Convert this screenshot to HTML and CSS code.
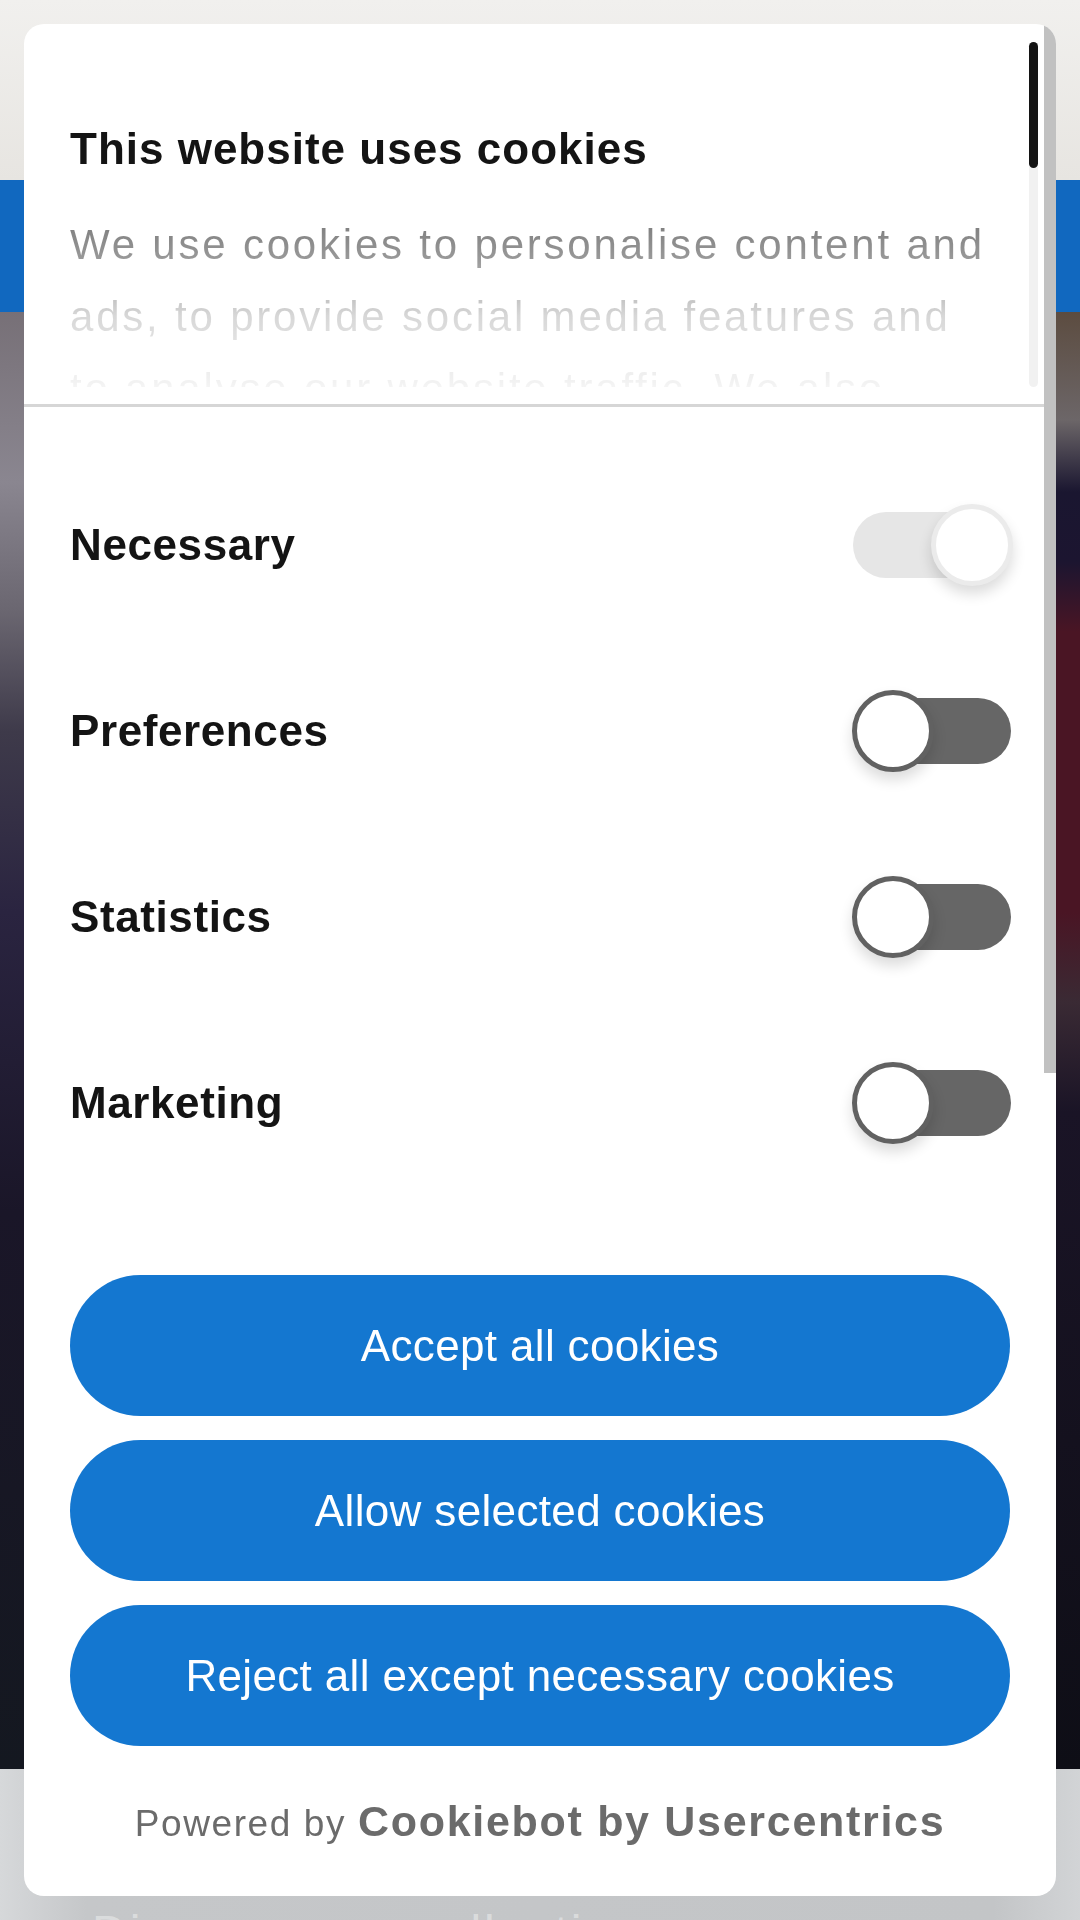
FILE: index.html
```html
<!DOCTYPE html>
<html lang="en">
  <head>
    <meta charset="UTF-8" />
    <meta name="viewport" content="width=device-width, initial-scale=1.0" />
    <title>This website uses cookies</title>
    <link rel="stylesheet" href="styles.css">
  </head>
  <body>
    <div class="page">
      <div class="site-top"></div>
      <div class="site-nav"></div>
      <div class="hero"></div>
      <div class="site-bottom">
        <h2>Discover our collection</h2>
      </div>
    </div>

    <div class="overlay">
      <div class="dialog">
        <div class="dialog-header">
          <div class="header-scroll">
            <h1>This website uses cookies</h1>
            <p>
              We use cookies to personalise content and ads, to provide social
              media features and to analyse our website traffic. We also share
              information about your use of our site with our social media,
              advertising and analytics partners who may combine it with other
              information that you’ve provided to them or that they’ve
              collected from your use of their services.
            </p>
          </div>
          <div class="fade"></div>
          <div class="header-scrollbar"><span class="thumb"></span></div>
        </div>

        <div class="categories">
          <label class="category">
            <span class="label">Necessary</span>
            <span class="toggle on disabled"><span class="knob"></span></span>
          </label>
          <label class="category">
            <span class="label">Preferences</span>
            <span class="toggle"><span class="knob"></span></span>
          </label>
          <label class="category">
            <span class="label">Statistics</span>
            <span class="toggle"><span class="knob"></span></span>
          </label>
          <label class="category">
            <span class="label">Marketing</span>
            <span class="toggle"><span class="knob"></span></span>
          </label>
        </div>

        <div class="actions">
          <button class="btn">Accept all cookies</button>
          <button class="btn">Allow selected cookies</button>
          <button class="btn">Reject all except necessary cookies</button>
        </div>

        <div class="powered">
          <p>Powered by <strong>Cookiebot by Usercentrics</strong></p>
        </div>

        <div class="dialog-scrollbar"></div>
      </div>
    </div>
  </body>
</html>
```

FILE: styles.css
```css
* {
  box-sizing: border-box;
}

html,
body {
  margin: 0;
  padding: 0;
}

body {
  font-family: "Liberation Sans", Arial, sans-serif;
  color: #141414;
}

/* page behind the consent dialog */
.site-top {
  height: 180px;
  background: linear-gradient(#f1f0ee, #e7e5e1);
}

.site-nav {
  height: 132px;
  background: #1168bf;
}

.hero {
  height: 1457px;
  background:
    linear-gradient(#777077 0, #8a8690 170px, #6a6670 300px, #3e3a4a 420px,
      #2a2440 600px, #1a1628 900px, #141820 100%) left / 50% 100% no-repeat,
    linear-gradient(#5c4c40 0, #6c6668 108px, #1a1630 180px, #1c1530 250px,
      #4a1524 320px, #4a1524 600px, #3a2a34 690px, #1a1426 800px,
      #0e0e16 100%) right / 50% 100% no-repeat;
}

.site-bottom {
  height: 151px;
  padding: 136px 0 0 92px;
  overflow: hidden;
  background: linear-gradient(to right, #d6d8da, #c5c7c9 8%, #c3c5c7 92%, #d2d4d6);
}

.site-bottom h2 {
  margin: 0;
  font-size: 48px;
  font-weight: normal;
  letter-spacing: 3px;
  color: rgba(255, 255, 255, 0.4);
}

/* consent dialog */
.overlay {
  position: fixed;
  inset: 0;
  padding: 24px;
}

.dialog {
  position: relative;
  height: 100%;
  display: flex;
  flex-direction: column;
  background: #fff;
  border-radius: 20px;
  overflow: hidden;
}

.dialog-scrollbar {
  position: absolute;
  top: 0;
  right: 0;
  width: 12px;
  height: 1049px;
  background: #c1c1c1;
}

.dialog-header {
  position: relative;
  height: 380px;
  flex: none;
  padding: 18px 18px 17px 0;
}

.header-scroll {
  height: 100%;
  overflow: hidden;
  padding: 71px 0 0 46px;
}

.header-scroll h1 {
  margin: 0 0 24px;
  font-size: 44px;
  line-height: 72px;
  letter-spacing: 1px;
}

.header-scroll p {
  width: 925px;
  margin: 0;
  font-size: 42px;
  line-height: 72px;
  letter-spacing: 2.8px;
}

.fade {
  position: absolute;
  top: 151px;
  left: 0;
  right: 27px;
  bottom: 0;
  background: linear-gradient(
    rgba(255, 255, 255, 0) 0,
    rgba(255, 255, 255, 0.46) 50px,
    rgba(255, 255, 255, 0.57) 85px,
    rgba(255, 255, 255, 0.83) 141px,
    rgba(255, 255, 255, 0.95) 209px,
    #fff 100%
  );
}

.header-scrollbar {
  position: absolute;
  top: 18px;
  right: 18px;
  width: 9px;
  height: 345px;
  border-radius: 5px;
  background: #f1f1f1;
}

.header-scrollbar .thumb {
  display: block;
  height: 126px;
  border-radius: 5px;
  background: #141414;
}

.categories {
  flex: none;
  border-top: 3px solid #d6d6d6;
  padding: 45px 46px 0;
}

.category {
  display: flex;
  align-items: center;
  justify-content: space-between;
  padding: 60px 0;
}

.category .label {
  font-size: 44px;
  font-weight: bold;
  letter-spacing: 0.6px;
}

.toggle {
  position: relative;
  width: 158px;
  height: 66px;
  margin-right: -1px;
  border-radius: 33px;
  background: #666;
}

.toggle .knob {
  position: absolute;
  top: -8px;
  left: -1px;
  width: 82px;
  height: 82px;
  border: 5px solid #616161;
  border-radius: 50%;
  background: #fff;
  box-shadow: 0 8px 14px rgba(0, 0, 0, 0.14);
}

.toggle.on .knob {
  left: auto;
  right: -2px;
}

.toggle.disabled {
  background: #e6e6e6;
}

.toggle.disabled .knob {
  border-color: #ebebeb;
}

.actions {
  flex: none;
  display: flex;
  flex-direction: column;
  gap: 24px;
  margin-top: 79px;
  padding: 0 46px;
}

.btn {
  height: 141px;
  border: 0;
  border-radius: 71px;
  background: #1477d0;
  color: #fff;
  font-family: inherit;
  font-size: 44px;
  letter-spacing: 0.35px;
}

.powered {
  flex: 1;
  display: flex;
  align-items: center;
  justify-content: center;
  color: #6b6b6b;
}

.powered p {
  margin: 0;
  font-size: 37px;
  letter-spacing: 1.6px;
}

.powered strong {
  font-size: 43px;
  letter-spacing: 1.7px;
}
```
